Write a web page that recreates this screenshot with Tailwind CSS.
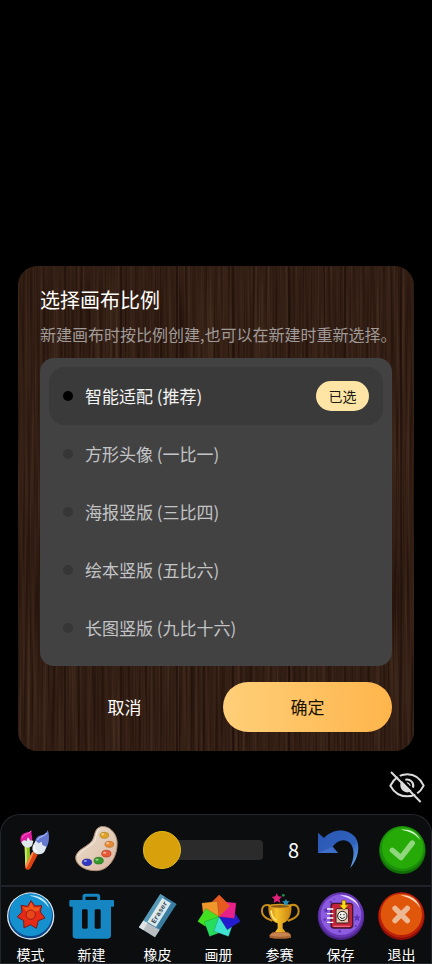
<!DOCTYPE html>
<html lang="zh-CN">
    <head>
        <meta charset="UTF-8">
        <meta name="viewport" content="width=device-width, initial-scale=1.0">
        <title>选择画布比例</title>
        <script src="https://cdn.jsdelivr.net/npm/@tailwindcss/browser@4"></script>
    </head>

    <body class="bg-black text-white font-['Noto_Sans_CJK_SC',sans-serif]">
        <div class="flex min-h-screen flex-col justify-end">

            <!-- Canvas ratio dialog -->
            <form role="dialog" aria-labelledby="dialog-title" class="relative isolate mx-[18px] overflow-hidden rounded-[20px] bg-[#301d13] px-[22px] pt-5 pb-[19px]">
                <!-- Wood grain -->
                <svg class="absolute inset-0 -z-10 h-full w-full" aria-hidden="true">
                    <defs>
                        <filter id="grain" x="0" y="0" width="100%" height="100%" color-interpolation-filters="sRGB">
                            <feTurbulence type="fractalNoise" baseFrequency="0.4 0.008" numOctaves="2" seed="4" />
                            <feColorMatrix values="0.2 0 0 0 0.1  0.15 0 0 0 0.045  0.12 0 0 0 0.02  0 0 0 0 1" />
                        </filter>
                        <pattern id="planks" width="56" height="56" patternUnits="userSpaceOnUse">
                            <path d="M8 0V56M19 0V56M31 0V56" stroke="#150a05" stroke-width="1" opacity=".3" />
                            <path d="M47 0V56" stroke="#150a05" stroke-width="2" opacity=".5" />
                        </pattern>
                    </defs>
                    <rect width="100%" height="100%" filter="url(#grain)" />
                    <rect width="100%" height="100%" fill="url(#planks)" />
                </svg>

                <h1 id="dialog-title" class="text-xl leading-7">选择画布比例</h1>
                <p class="mt-2 text-base leading-6 whitespace-nowrap text-[#a09b99]">新建画布时按比例创建,也可以在新建时重新选择。</p>

                <div class="mt-3 rounded-[14px] bg-[#424242] p-[9px] text-[17px] text-[#c2c4c6]">
                    <label class="group flex h-[58px] items-center gap-3 rounded-2xl px-[14px] has-checked:bg-[#3a3a3a] has-checked:text-[#f2f2f2]">
                        <input type="radio" name="ratio" checked class="size-[10px] appearance-none rounded-full bg-[#363636] checked:bg-black" />
                        智能适配 (推荐)
                        <span class="ml-auto hidden h-[30px] w-[53px] rounded-full bg-[#fee5a5] text-center text-sm leading-[30px] text-[#1c1a14] group-has-checked:block">已选</span>
                    </label>
                    <label class="group flex h-[58px] items-center gap-3 rounded-2xl px-[14px] has-checked:bg-[#3a3a3a] has-checked:text-[#f2f2f2]">
                        <input type="radio" name="ratio" class="size-[10px] appearance-none rounded-full bg-[#363636] checked:bg-black" />
                        方形头像 (一比一)
                    </label>
                    <label class="group flex h-[58px] items-center gap-3 rounded-2xl px-[14px] has-checked:bg-[#3a3a3a] has-checked:text-[#f2f2f2]">
                        <input type="radio" name="ratio" class="size-[10px] appearance-none rounded-full bg-[#363636] checked:bg-black" />
                        海报竖版 (三比四)
                    </label>
                    <label class="group flex h-[58px] items-center gap-3 rounded-2xl px-[14px] has-checked:bg-[#3a3a3a] has-checked:text-[#f2f2f2]">
                        <input type="radio" name="ratio" class="size-[10px] appearance-none rounded-full bg-[#363636] checked:bg-black" />
                        绘本竖版 (五比六)
                    </label>
                    <label class="group flex h-[58px] items-center gap-3 rounded-2xl px-[14px] has-checked:bg-[#3a3a3a] has-checked:text-[#f2f2f2]">
                        <input type="radio" name="ratio" class="size-[10px] appearance-none rounded-full bg-[#363636] checked:bg-black" />
                        长图竖版 (九比十六)
                    </label>
                </div>

                <div class="mt-4 flex gap-[14px] text-[17px]">
                    <button type="button" class="h-[50px] flex-1 rounded-full">取消</button>
                    <button type="button" class="h-[50px] flex-1 rounded-full bg-linear-to-r from-[#ffcf78] to-[#ffb54b] text-[#1a1408]">确定</button>
                </div>
            </form>

            <!-- Hide toolbar -->
            <div class="flex justify-end pt-[18px] pr-[7px] pb-[9px]">
                <button aria-label="隐藏">
                    <svg class="size-9" viewBox="537 357 108 108" fill="none">
                        <path d="M541 407C553 384 570 373 592 373s38 11 49 34c-11 22-27 32-49 32s-39-10-51-32z" stroke="#dcdcdc" stroke-width="6" stroke-linejoin="round" />
                        <path d="M577 391a21 21 0 1 0 30 30z" fill="#dcdcdc" />
                        <path d="M586 389a19 19 0 0 1 23 24" stroke="#dcdcdc" stroke-width="6" />
                        <path d="M590 399q8 0 10 9" stroke="#dcdcdc" stroke-width="4" />
                        <path d="M550 363L640 453" stroke="#000" stroke-width="7" />
                        <path d="M543 366L632 456" stroke="#dcdcdc" stroke-width="6" />
                    </svg>
                </button>
            </div>

            <!-- Bottom toolbar -->
            <footer class="rounded-t-[20px] bg-[#0b0d0f] inset-ring inset-ring-[#22252c]">
                <div class="flex h-[73px] items-center border-b-2 border-[#1f222a] pl-1">
                    <button class="flex w-[61px] justify-center" aria-label="画笔">
                        <svg class="size-12" viewBox="32 48 144 144">
                            <path d="M73 108L88 106 90 168 Q84 180 75 172z" fill="#8fc51c" />
                            <path d="M73 108L79 107 80 174 75 170z" fill="#c9ea72" />
                            <path d="M94 60C91 73 99 82 94 96L80 91 65 101C56 90 60 72 75 68 84 66 90 66 94 60z" fill="#e01aa0" />
                            <path d="M92 63C86 73 70 70 66 84" fill="none" stroke="#f56cc9" stroke-width="3" />
                            <path d="M63 97l8-7 7 3 5-12 6 10 10 1-3 14c-8 12-28 9-33-9z" fill="#dfe7ea" />
                            <path d="M96 125L112 134 91 174C85 185 70 177 75 167z" fill="#dc4212" />
                            <path d="M96 125L101 128 79 174C74 172 75 167 77 162z" fill="#f98a45" />
                            <path d="M142 60C149 78 147 103 135 118L123 117 105 98C104 84 114 76 126 75 136 72 139 68 142 60z" fill="#6478cf" />
                            <path d="M139 69C132 82 116 77 111 91" fill="none" stroke="#a2b2f0" stroke-width="4" />
                            <path d="M99 104l7-12 9 8 9-5 2 10 12 5-3 9c-4 16-26 18-36 6-4-6-4-14 0-21z" fill="#dfe8ee" />
                            <path d="M103 105c-5 8-1 17 8 20" fill="none" stroke="#fff" stroke-width="4" />
                        </svg>
                    </button>
                    <button class="flex w-[61px] justify-center" aria-label="调色板">
                        <svg class="size-12" viewBox="215 48 144 144">
                            <defs>
                                <linearGradient id="wood" x1="0" y1="0" x2="1" y2="1">
                                    <stop offset="0" stop-color="#e8dcc8" />
                                    <stop offset=".5" stop-color="#e3cdb9" />
                                    <stop offset="1" stop-color="#d9b5a0" />
                                </linearGradient>
                            </defs>
                            <path d="M301 50C324 46 346 65 350 92 354 132 331 181 288 182 252 183 225 163 226 142 228 118 263 111 276 91 285 76 281 56 301 50z" fill="url(#wood)" stroke="#a98a72" stroke-width="3" />
                            <path d="M297 56C283 68 292 85 278 100 264 113 237 122 232 140" fill="none" stroke="#f7efe2" stroke-width="3" />
                            <g stroke-width="2">
                                <ellipse cx="312" cy="76" rx="13" ry="9" fill="#dfa329" stroke="#ad7a19" />
                                <ellipse cx="327" cy="103" rx="13" ry="9" fill="#e88a35" stroke="#b5651f" />
                                <ellipse cx="318" cy="131" rx="14" ry="10" fill="#e65a38" stroke="#b03b20" />
                                <ellipse cx="295" cy="152" rx="14" ry="10" fill="#35982b" stroke="#20701a" />
                                <ellipse cx="260" cy="157" rx="14" ry="10" fill="#2f37c4" stroke="#1e2490" />
                            </g>
                            <g fill="#fff" opacity=".5">
                                <ellipse cx="307" cy="73" rx="5" ry="3" />
                                <ellipse cx="322" cy="100" rx="5" ry="3" />
                                <ellipse cx="313" cy="128" rx="5" ry="3" />
                                <ellipse cx="290" cy="149" rx="5" ry="3" />
                                <ellipse cx="255" cy="153" rx="5" ry="3" />
                            </g>
                        </svg>
                    </button>
                    <input type="range" id="brush-size" min="8" max="100" value="8" aria-label="画笔大小" class="ml-[17px] h-[38px] min-w-0 flex-1 appearance-none bg-transparent [&::-webkit-slider-runnable-track]:h-5 [&::-webkit-slider-runnable-track]:rounded-[4px] [&::-webkit-slider-runnable-track]:bg-[#2b2b2b] [&::-webkit-slider-thumb]:-mt-[9px] [&::-webkit-slider-thumb]:size-[38px] [&::-webkit-slider-thumb]:appearance-none [&::-webkit-slider-thumb]:rounded-full [&::-webkit-slider-thumb]:border [&::-webkit-slider-thumb]:border-[#e2b81a] [&::-webkit-slider-thumb]:bg-[#d8a10c]" />
                    <output for="brush-size" class="w-[51px] pl-[10px] text-center text-xl">8</output>
                    <button class="flex w-12 justify-center" aria-label="撤销">
                        <svg class="size-12" viewBox="132 48 144 144">
                            <defs>
                                <linearGradient id="undo" x1="0" y1="0" x2="1" y2="1">
                                    <stop offset="0" stop-color="#2b55b4" />
                                    <stop offset=".6" stop-color="#2f62bd" />
                                    <stop offset="1" stop-color="#6fb1ec" />
                                </linearGradient>
                            </defs>
                            <path d="M144 68L162 84C188 54 235 54 256 82 273 107 265 148 240 175 253 145 254 119 243 103 229 84 203 87 188 110L204 129H144z" fill="url(#undo)" />
                            <path d="M144 129L188 110 204 129z" fill="#4a7ad2" opacity=".6" />
                        </svg>
                    </button>
                    <button class="ml-[9px] flex w-[61px] justify-center" aria-label="完成">
                        <svg class="size-12" viewBox="322 48 144 144">
                            <circle cx="395" cy="122" r="70" fill="#126d08" />
                            <circle cx="395" cy="116" r="68" fill="#1c8f0a" />
                            <circle cx="396" cy="114" r="62" fill="#25aa08" />
                            <path d="M391 59C418 55 442 70 449 91 436 73 418 64 391 59z" fill="#d7f5cf" />
                            <path d="M365 121L391 143 425 99" fill="none" stroke="#8fd67c" stroke-width="16" stroke-linecap="round" stroke-linejoin="round" />
                        </svg>
                    </button>
                </div>

                <div class="flex justify-between text-sm leading-5">
                    <div class="flex">
                        <button class="flex w-[61px] flex-col items-center gap-1 pt-[5px]">
                            <svg class="size-12" viewBox="20 30 144 144">
                                <circle cx="91" cy="102" r="71" fill="#dce4ea" />
                                <circle cx="91" cy="102" r="67" fill="#0c4687" />
                                <circle cx="91" cy="98" r="64" fill="#1591cf" />
                                <path d="M87 41C115 38 140 54 146 78 134 58 116 47 87 41z" fill="#c8ebfa" />
                                <path d="M92 56L104 72 124 71 120 90 134 108 114 116 108 139 91 128 71 138 70 116 51 105 65 90 62 70 82 73z" fill="#e52b17" stroke="#771a17" stroke-width="3" stroke-linejoin="round" />
                                <path d="M92 61L101 77 119 75 113 88H78L67 75 85 77z" fill="#f47a18" opacity=".6" />
                                <circle cx="91" cy="98" r="14" fill="#e8471b" stroke="#9e1a14" stroke-width="3" />
                            </svg>
                            模式
                        </button>
                        <button class="flex w-[61px] flex-col items-center gap-1 pt-[5px]">
                            <svg class="size-12" viewBox="203 30 144 144">
                                <path d="M251 56V44q0-4 4-4H291q4 0 4 4V56" fill="none" stroke="#1586c2" stroke-width="9" />
                                <path fill-rule="evenodd" fill="#1586c2" d="M210 54H338q3 0 3 3V71q0 3-3 3H332V160q0 10-10 10H227q-10 0-10-10V74H210q-3 0-3-3V57q0-3 3-3zM249 82q-4 0-4 4V136q0 4 4 4H258q4 0 4-4V86q0-4-4-4zM287 82q-4 0-4 4V136q0 4 4 4H297q4 0 4-4V86q0-4-4-4z" />
                            </svg>
                            新建
                        </button>
                    </div>
                    <div class="flex">
                        <button class="flex w-[61px] flex-col items-center gap-1 pt-[5px]">
                            <svg class="size-12" viewBox="26 30 144 144">
                                <path d="M105 36L154 66 89 166 41 136z" fill="#397da0" />
                                <path d="M105 36L118 44 54 144 41 136z" fill="#5599b6" />
                                <path d="M54 116L103 143 89 166 41 136z" fill="#b9bec2" />
                                <path d="M54 116L67 123 54 144 41 136z" fill="#dfe2e4" />
                                <path d="M111 48L137 64 92 135 66 120z" fill="#dce9ed" />
                                <text transform="translate(88 126) rotate(-58)" font-family="Liberation Mono" font-size="21" font-weight="bold" fill="#31444f">Eraser</text>
                            </svg>
                            橡皮
                        </button>
                        <button class="flex w-[61px] flex-col items-center gap-1 pt-[5px]">
                            <!-- Seven squares fanned round one corner -->
                            <svg class="size-12" viewBox="-72 -74 144 144">
                                <g stroke="#151515" stroke-opacity=".5" stroke-width="1">
                                    <path d="M0 0L33-33 0-66-33-33z" fill="#e65a20" />
                                    <path d="M0 0L33-33 0-66-33-33z" fill="#ef972b" transform="rotate(-51.4)" />
                                    <path d="M0 0L33-33 0-66-33-33z" fill="#43df21" transform="rotate(-102.9)" />
                                    <path d="M0 0L33-33 0-66-33-33z" fill="#27dd5e" transform="rotate(-154.3)" />
                                    <path d="M0 0L33-33 0-66-33-33z" fill="#3fe3d2" transform="rotate(-205.7)" />
                                    <path d="M0 0L33-33 0-66-33-33z" fill="#231ccf" transform="rotate(-257.1)" />
                                    <path d="M0 0L33-33 0-66-33-33z" fill="#e8208c" transform="rotate(-308.6)" />
                                </g>
                                <path d="M0 0L33-33 0-66z" fill="#e65a20" />
                            </svg>
                            画册
                        </button>
                        <button class="flex w-[61px] flex-col items-center gap-1 pt-[5px]">
                            <svg class="size-12" viewBox="32 30 144 144">
                                <defs>
                                    <linearGradient id="gold">
                                        <stop offset="0" stop-color="#c07d12" />
                                        <stop offset=".35" stop-color="#f6c22b" />
                                        <stop offset="1" stop-color="#cb830f" />
                                    </linearGradient>
                                </defs>
                                <path d="M73 70C46 62 45 94 59 105 66 112 76 113 81 117M134 70C164 62 165 94 151 105 144 112 133 113 127 117" fill="none" stroke="#c68c1b" stroke-width="6" />
                                <path d="M69 71H138C141 100 128 118 112 124V139C117 146 121 150 126 155H83C89 150 94 146 97 139V124C79 118 67 100 69 71z" fill="url(#gold)" />
                                <ellipse cx="104" cy="72" rx="35" ry="7" fill="#d99a20" />
                                <ellipse cx="104" cy="73" rx="28" ry="4" fill="#875914" />
                                <path d="M77 85C78 101 84 110 93 116" fill="none" stroke="#ffe477" stroke-width="5" />
                                <path d="M81 151H129L137 160V167Q105 174 73 167V160z" fill="#aa6535" />
                                <ellipse cx="105" cy="158" rx="31" ry="6" fill="#c78450" />
                                <path d="M94 34L99 43 110 44 102 52 105 62 95 57 85 63 87 52 79 45 90 43z" fill="#e1217c" />
                                <path d="M122 50L125 57 133 58 127 63 129 71 122 67 115 71 116 63 110 58 119 57z" fill="#2690b4" />
                                <circle cx="114" cy="40" r="4" fill="#219750" />
                            </svg>
                            参赛
                        </button>
                        <button class="flex w-[61px] flex-col items-center gap-1 pt-[5px]">
                            <svg class="size-12" viewBox="215 30 144 144">
                                <circle cx="287" cy="104" r="70" fill="#4a2487" />
                                <circle cx="287" cy="99" r="68" fill="#6635b1" />
                                <circle cx="287" cy="98" r="61" fill="#8c5bdf" />
                                <path d="M283 40C313 36 337 54 342 77 330 58 312 47 283 40z" fill="#e9dcff" />
                                <g fill="#5c35b5">
                                    <path d="M335 96l3 7 8 1-6 5 2 8-7-4-7 4 2-8-6-5 8-1z" />
                                    <path d="M242 76l2 5 6 1-4 4 1 6-5-3-5 3 1-6-4-4 6-1z" />
                                    <circle cx="257" cy="61" r="4" />
                                    <circle cx="238" cy="113" r="4" />
                                    <circle cx="283" cy="148" r="4" />
                                    <circle cx="331" cy="132" r="3" />
                                    <circle cx="267" cy="52" r="2" />
                                </g>
                                <rect x="257" y="64" width="65" height="74" rx="9" fill="#c42338" stroke="#43152e" stroke-width="4" />
                                <path d="M264 133H314" stroke="#f0667a" stroke-width="4" />
                                <rect x="272" y="80" width="38" height="43" rx="4" fill="#e6c4a9" stroke="#3a1a22" stroke-width="3" />
                                <circle cx="291" cy="102" r="14" fill="#f3f1ec" stroke="#1c1c1c" stroke-width="3" />
                                <path d="M283 104q8 11 16 0" fill="none" stroke="#1c1c1c" stroke-width="3" />
                                <circle cx="286" cy="98" r="2" fill="#1c1c1c" />
                                <circle cx="296" cy="98" r="2" fill="#1c1c1c" />
                                <path d="M245 81H264M245 95H264M245 108H264M245 121H264" stroke="#fff" stroke-width="4" />
                                <path d="M290 55H301V69H309L296 84 282 69H290z" fill="#f8dc17" stroke="#7d5a0b" stroke-width="2" />
                            </svg>
                            保存
                        </button>
                        <button class="flex w-[61px] flex-col items-center gap-1 pt-[5px]">
                            <svg class="size-12" viewBox="398 30 144 144">
                                <circle cx="468" cy="104" r="70" fill="#8e0d08" />
                                <circle cx="468" cy="99" r="68" fill="#b9200a" />
                                <circle cx="468" cy="97" r="62" fill="#e0560b" />
                                <path d="M465 40C495 36 519 54 525 79 512 58 494 47 465 40z" fill="#fbdcc0" />
                                <path d="M449 79L486 116M486 79L449 116" stroke="#ecb995" stroke-width="16" stroke-linecap="round" />
                            </svg>
                            退出
                        </button>
                    </div>
                </div>
            </footer>
        </div>

        <script>
            const slider = document.getElementById('brush-size');
            slider.addEventListener('input', function() {
                document.querySelector('output').textContent = slider.value;
            });
        </script>
    </body>
</html>
